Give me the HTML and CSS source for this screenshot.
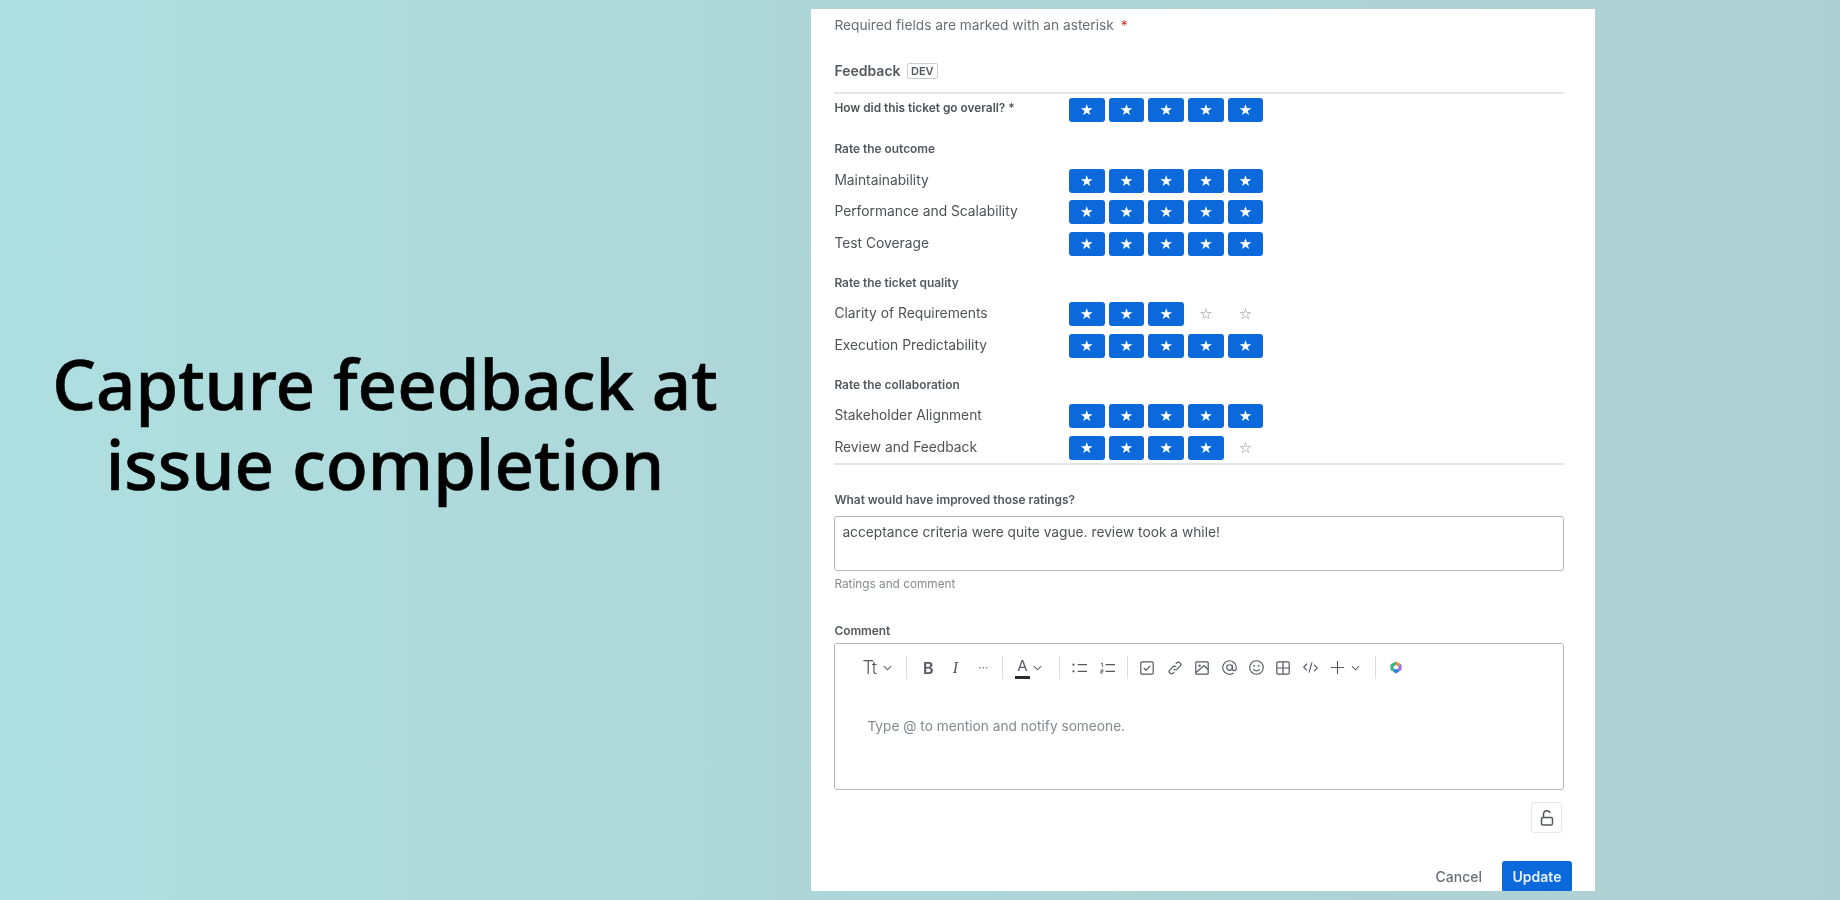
FILE: index.html
```html
<!DOCTYPE html>
<html lang="en">
<head>
<meta charset="utf-8">
<title>Capture feedback at issue completion</title>
<link rel="stylesheet" href="styles.css">
</head>
<body>
<section class="hero"><h1>Capture feedback at<br>issue completion</h1></section>
<main class="panel">
  <p class="required">Required fields are marked with an asterisk <span class="red">*</span></p>
  <div class="feedback-head"><span>Feedback</span><span class="badge">DEV</span></div>

  <div class="row first"><span class="label strong">How did this ticket go overall? *</span><div class="stars"><button class="star on">★</button><button class="star on">★</button><button class="star on">★</button><button class="star on">★</button><button class="star on">★</button></div></div>

  <h2 class="group g1">Rate the outcome</h2>
  <div class="row"><span class="label">Maintainability</span><div class="stars"><button class="star on">★</button><button class="star on">★</button><button class="star on">★</button><button class="star on">★</button><button class="star on">★</button></div></div>
  <div class="row"><span class="label">Performance and Scalability</span><div class="stars"><button class="star on">★</button><button class="star on">★</button><button class="star on">★</button><button class="star on">★</button><button class="star on">★</button></div></div>
  <div class="row"><span class="label">Test Coverage</span><div class="stars"><button class="star on">★</button><button class="star on">★</button><button class="star on">★</button><button class="star on">★</button><button class="star on">★</button></div></div>

  <h2 class="group">Rate the ticket quality</h2>
  <div class="row"><span class="label">Clarity of Requirements</span><div class="stars"><button class="star on">★</button><button class="star on">★</button><button class="star on">★</button><button class="star">☆</button><button class="star">☆</button></div></div>
  <div class="row"><span class="label">Execution Predictability</span><div class="stars"><button class="star on">★</button><button class="star on">★</button><button class="star on">★</button><button class="star on">★</button><button class="star on">★</button></div></div>

  <h2 class="group">Rate the collaboration</h2>
  <div class="row"><span class="label">Stakeholder Alignment</span><div class="stars"><button class="star on">★</button><button class="star on">★</button><button class="star on">★</button><button class="star on">★</button><button class="star on">★</button></div></div>
  <div class="row"><span class="label">Review and Feedback</span><div class="stars"><button class="star on">★</button><button class="star on">★</button><button class="star on">★</button><button class="star on">★</button><button class="star">☆</button></div></div>
  <div class="rule"></div>

  <h2 class="group improve">What would have improved those ratings?</h2>
  <div class="field">acceptance criteria were quite vague. review took a while!</div>
  <p class="hint">Ratings and comment</p>

  <h2 class="group comment">Comment</h2>
  <div class="editor">
    <div class="toolbar">
      <span class="tt">Tt</span>
      <svg class="chev" viewBox="0 0 10 6"><path d="M1 1l4 4 4-4"/></svg>
      <i class="sep s1"></i>
      <span class="fmt bold">B</span>
      <span class="fmt ital">I</span>
      <span class="more">···</span>
      <i class="sep s2"></i>
      <span class="color">A</span>
      <svg class="chev" viewBox="0 0 10 6"><path d="M1 1l4 4 4-4"/></svg>
      <i class="sep s3"></i>
      <svg class="ico list" viewBox="0 0 16 12"><circle cx="1.6" cy="2.5" r="1.2" class="fill"/><circle cx="1.6" cy="9.5" r="1.2" class="fill"/><path d="M6 2.5h10M6 9.5h10"/></svg>
      <svg class="ico list" viewBox="0 0 16 12"><path d="M1 1.5l1.5-1v4.6M.6 8h2.6v1.6H.8v1.8h2.6" class="thin"/><path d="M6 2.5h10M6 9.5h10"/></svg>
      <i class="sep s4"></i>
      <span class="tool"><svg viewBox="0 0 14 14"><rect x=".8" y=".8" width="12.4" height="12.4" rx="1.2"/><path d="M3.8 7l2.3 2.4 4-4.6"/></svg></span>
      <span class="tool"><svg viewBox="0 0 14 14"><path d="M5.8 8.2a2.3 2.3 0 0 0 3.3 0l3-3a2.3 2.3 0 0 0-3.3-3.3l-1 1M8.2 5.8a2.3 2.3 0 0 0-3.3 0l-3 3a2.3 2.3 0 0 0 3.3 3.3l1-1"/></svg></span>
      <span class="tool"><svg viewBox="0 0 14 14"><rect x=".8" y=".8" width="12.4" height="12.4" rx="1"/><path d="M1 11.5l8-7 4 4"/><circle cx="4.6" cy="4.6" r="1.2" class="fill"/></svg></span>
      <span class="tool wide"><svg viewBox="0 0 16 16"><circle cx="8" cy="8" r="3"/><path d="M11 5v4.2a2.1 2.1 0 0 0 4.2 0V8a7.2 7.2 0 1 0-3 5.9"/></svg></span>
      <span class="tool wide"><svg viewBox="0 0 16 16"><circle cx="8" cy="8" r="7.2"/><circle cx="5.6" cy="6.2" r="1" class="fill"/><circle cx="10.4" cy="6.2" r="1" class="fill"/><path d="M4.6 9.6c1.6 2.6 5.2 2.6 6.8 0"/></svg></span>
      <span class="tool"><svg viewBox="0 0 14 14"><rect x=".8" y=".8" width="12.4" height="12.4" rx="1.2"/><path d="M7 1v12M1 7h12"/></svg></span>
      <span class="tool wide"><svg viewBox="0 0 16 16"><path d="M4.2 4L.8 7.6l3.4 3.4M11.8 5l3.4 3.6-3.4 3.4M9.6 2.5L6.4 13.5"/></svg></span>
      <span class="tool wide"><svg viewBox="0 0 16 16"><path d="M8 1v14M1 8h14"/></svg></span>
      <svg class="chev" viewBox="0 0 10 6"><path d="M1 1l4 4 4-4"/></svg>
      <i class="sep s5"></i>
      <svg class="rovo" viewBox="0 0 12 12"><path d="M6 0l4 2.2L8.4 5 6 3.6z" fill="#f18d1e"/><path d="M10 2.2L11.5 3v5.5L9 10 8.4 7V5z" fill="#a06ae0"/><path d="M9 10l-3 2-3-2 1.6-2.8L6 8l2.4-1z" fill="#2f7de1"/><path d="M3 10L.5 8.5V3L3 1.6 6 0v3.6L3.6 5v2.2L4.6 7.2z" fill="#3fb27f"/></svg>
    </div>
    <p class="placeholder">Type @ to mention and notify someone.</p>
  </div>
  <div class="lock-row"><button class="lock"><svg viewBox="0 0 14 16"><rect x="1.5" y="7.5" width="11" height="7.5" rx="1.5"/><path d="M3.5 7.5V4a3.4 3.4 0 0 1 6.6-1"/></svg></button></div>
  <div class="actions"><span class="cancel">Cancel</span><button class="update">Update</button></div>
</main>
</body>
</html>
```
FILE: styles.css
```css
* { box-sizing: border-box; }
html, body { margin: 0; height: 900px; }
body {
  display: flex;
  overflow: hidden;
  background: linear-gradient(90deg, #aedfe0 0%, #aed6d8 45%, #afd0d3 100%);
  font-family: Inter, "Liberation Sans", sans-serif;
  color: #44464c;
}
.hero { flex: none; width: 770px; margin-right: 41px; padding-top: 343px; }
h1 {
  margin: 0;
  font: 500 69px/80px "Noto Sans", sans-serif;
  letter-spacing: -.05px;
  color: #000;
  text-align: center;
  -webkit-text-stroke: .6px #000;
}
.panel {
  flex: none;
  width: 784px;
  height: 882px;
  margin-top: 9px;
  padding: 7px 31px 0 23.4px;
  background: #fff;
  overflow: hidden;
  filter: blur(.4px);
}
.required { margin: 0; font-size: 13.73px; line-height: 18px; color: #6b6e76; }
.red { color: #c9372c; margin-left: 3px; }
.feedback-head {
  display: flex;
  align-items: center;
  gap: 6.5px;
  height: 32px;
  margin-top: 28px;
  padding: 0 0 13px;
  border-bottom: 2px solid #e4e5e7;
  font-size: 14px;
  line-height: 16px;
  font-weight: 600;
  color: #55585f;
}
.badge {
  display: flex;
  align-items: center;
  height: 16px;
  padding: 0 3px;
  border: 1px solid #c9cbcf;
  border-radius: 2px;
  font-size: 11px;
  font-weight: 600;
}
.row { display: flex; align-items: center; height: 24px; margin-top: 7.5px; }
.row.first { margin-top: 4px; }
.label { flex: none; width: 234.6px; padding-bottom: 2px; font-size: 13.8px; color: #505258; }
.label.strong { padding-bottom: 4px; font-size: 11.85px; font-weight: 600; }
.stars { display: flex; gap: 4px; }
.star {
  flex: none;
  width: 35.7px;
  height: 24px;
  padding: 0;
  border: 0;
  border-radius: 3px;
  background: transparent;
  font: 15px/24px "DejaVu Sans", sans-serif;
  color: #8c8f97;
}
.star.on { background: #0b69dc; color: #fff; }
.group { margin: 19px 0 11.5px; font-size: 11.9px; line-height: 16px; font-weight: 600; color: #55585f; }
.group + .row { margin-top: 0; }
.rule { height: 2px; margin-top: 3.5px; background: #e4e5e7; }
.improve { margin: 27px 0 8px; }
.field {
  height: 55px;
  padding: 6px 7px;
  border: 1.5px solid #b4b6ba;
  border-radius: 3px;
  font-size: 13.76px;
  line-height: 18px;
  color: #505258;
}
.hint { margin: 5px 0 0; font-size: 11.8px; line-height: 16px; color: #868990; }
.comment { margin: 31px 0 4px; }
.editor { height: 147px; border: 1.5px solid #b4b6ba; border-radius: 3px; }
.toolbar { display: flex; align-items: center; height: 24px; margin-top: 11.5px; padding-left: 27px; }
.tt { width: 18px; font-size: 18px; font-weight: 300; line-height: 24px; color: #55585f; letter-spacing: -.3px; }
.chev { flex: none; width: 9px; height: 6px; margin-left: 3px; fill: none; stroke: #5c5f66; stroke-width: 1.2; }
.sep { flex: none; width: 1px; height: 23px; background: #dcdee1; }
.s1 { margin: 0 0 0 14px; }
.fmt { width: 12px; text-align: center; line-height: 24px; }
.bold { margin-left: 15px; font-size: 16px; font-weight: 600; color: #55585f; }
.ital { margin-left: 15px; font: italic 16px/24px "Liberation Serif", serif; color: #55585f; }
.more { width: 12px; margin-left: 16px; font-size: 12px; letter-spacing: 0; color: #5c5f66; text-align: center; }
.s2 { margin-left: 12.5px; }
.color { width: 15px; margin-left: 12px; height: 22px; font-size: 15px; line-height: 18px; text-align: center; border-bottom: 3px solid #292a2e; color: #5c5f66; }
.s3 { margin-left: 17px; }
.ico { flex: none; width: 15px; height: 12px; margin-left: 12px; fill: none; stroke: #55585f; stroke-width: 1.3; }
.ico + .ico { margin-left: 13px; }
.ico .thin { stroke-width: .9; }
.fill { fill: #55585f; stroke: none; }
.s4 { margin-left: 12px; }
.s4 + .tool { margin-left: 6px; }
.tool { flex: none; display: flex; justify-content: center; width: 27.2px; }
.tool svg { width: 14px; height: 14px; fill: none; stroke: #55585f; stroke-width: 1.2; }
.tool.wide svg { width: 15px; height: 15px; }
.tool + .chev { margin-left: 0; }
.s5 { margin-left: 15px; }
.rovo { flex: none; width: 12px; height: 13px; margin-left: 14px; }
.placeholder { margin: 37.5px 0 0 32px; font-size: 13.7px; line-height: 18px; color: #868990; }
.lock-row { display: flex; justify-content: flex-end; margin: 12px 2px 0 0; }
.lock { display: flex; align-items: center; justify-content: center; width: 31px; height: 31px; padding: 0; background: #fff; border: 1px solid #e6e7e9; border-radius: 3px; }
.lock svg { width: 14px; height: 16px; fill: none; stroke: #55585f; stroke-width: 1.5; }
.actions { display: flex; justify-content: flex-end; align-items: center; gap: 20px; margin: 28px -8px 0 0; }
.cancel { font-size: 14px; font-weight: 500; color: #6b6e76; }
.update { width: 70px; height: 31px; padding: 0; border: 0; border-radius: 3px; background: #0b69dc; color: #e8f0fc; font: 600 14px Inter, sans-serif; }
```
